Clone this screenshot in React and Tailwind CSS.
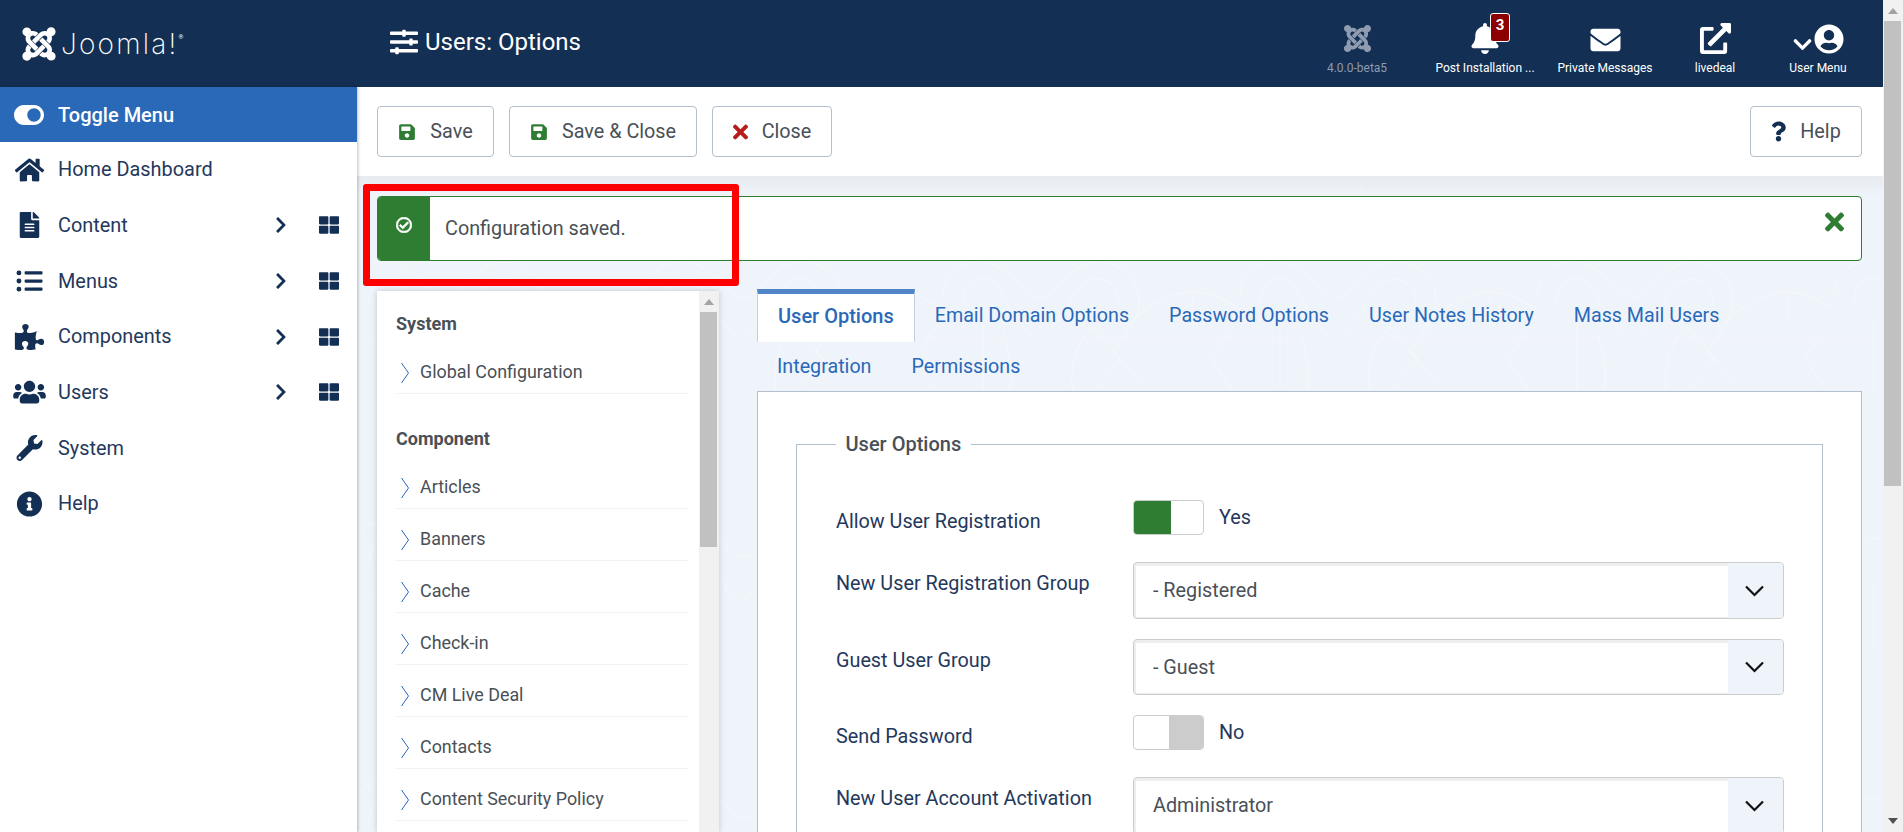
import React from "react";
import {
  FaJoomla, FaBell, FaEnvelope, FaExternalLinkAlt, FaUserCircle, FaHome, FaFileAlt, FaListUl,
  FaPuzzlePiece, FaUsers, FaWrench, FaInfoCircle, FaThLarge, FaSave, FaTimes, FaQuestion, FaChevronRight,
  FaSlidersH, FaToggleOn, FaRegCheckCircle, FaChevronDown,
} from "react-icons/fa";

function Scrollbar({ thumbTop, thumbHeight, arrows = true, className = "" }) {
  return (
    <div className={"relative w-[20px] shrink-0 bg-[#f1f1f1] " + className}>
      <div className="absolute left-[calc(50%-5px)] top-[8px] h-0 w-0 border-x-[5px] border-b-[6px] border-x-transparent border-b-[#a3a3a3]" />
      <div className="absolute left-[1px] w-[17px] bg-[#c1c1c1]" style={{ top: thumbTop, height: thumbHeight }} />
      {arrows && (
        <div className="absolute bottom-[8px] left-[calc(50%-5px)] h-0 w-0 border-x-[5px] border-t-[6px] border-x-transparent border-t-[#505050]" />
      )}
    </div>
  );
}

function HeaderItem({ width, label, muted, children }) {
  return (
    <div className={"flex shrink-0 flex-col items-center " + width}>
      <div className="flex h-[41px] items-end justify-center">{children}</div>
      <div className={"mt-[7px] text-[12px] leading-[14px] " + (muted ? "text-[#8e9bb0]" : "text-white")}>{label}</div>
    </div>
  );
}

function Header() {
  return (
    <header className="flex h-[87px] shrink-0 items-center bg-[#132f53] text-white">
      <div className="flex w-[390px] shrink-0 items-center pl-[20px]">
        <FaJoomla className="h-[38px] w-[38px]" />
        <span className="ml-[3px] font-['Inter'] text-[28px] font-extralight leading-none tracking-[2.2px]">Joomla!</span>
        <span className="mb-[14px] text-[6px] leading-none">®</span>
      </div>
      <FaSlidersH className="mb-[3px] h-[28px] w-[30px] -translate-x-[1px]" />
      <h1 className="mb-[3px] ml-[5px] text-[24px] leading-none">Users: Options</h1>
      <div className="ml-auto flex items-start pr-[16px] pt-[1px]">
        <HeaderItem width="w-[128px]" label="4.0.0-beta5" muted>
          <FaJoomla className="h-[31px] w-[31px] text-[#8e9bb0]" />
        </HeaderItem>
        <HeaderItem width="w-[128px]" label="Post Installation ...">
          <div className="relative">
            <FaBell className="h-[31px] w-[28px]" />
            <span className="absolute -top-[10px] left-[19px] flex h-[29px] w-[20px] items-center justify-center rounded-[3px] border border-white bg-[#8b0000] pb-[5px] text-[15px] font-bold">3</span>
          </div>
        </HeaderItem>
        <HeaderItem width="w-[112px]" label="Private Messages">
          <FaEnvelope className="mb-[-1px] h-[30px] w-[31px]" />
        </HeaderItem>
        <HeaderItem width="w-[108px]" label="livedeal">
          <FaExternalLinkAlt className="h-[31px] w-[31px]" />
        </HeaderItem>
        <HeaderItem width="w-[98px]" label="User Menu">
          <div className="flex items-end">
            <FaChevronDown className="mb-[-1px] h-[21px] w-[21px]" />
            <FaUserCircle className="ml-[1px] h-[30px] w-[30px]" />
          </div>
        </HeaderItem>
      </div>
    </header>
  );
}

function SideItem({ icon: Icon, label, more }) {
  return (
    <div className="flex h-[55.67px] items-center text-[19.9px] text-[#24385c]">
      <span className="flex w-[58px] shrink-0 justify-center text-[#132f53]">
        <Icon className="h-[26px] w-[33px]" />
      </span>
      <span className="pt-[1px]">{label}</span>
      {more && (
        <span className="ml-auto flex items-center pr-[17px] text-[#132f53]">
          <FaChevronRight className="h-[18px] w-[14px]" />
          <FaThLarge className="ml-[30px] h-[20px] w-[22px]" />
        </span>
      )}
    </div>
  );
}

function Sidebar() {
  return (
    <aside className="z-10 w-[357px] shrink-0 bg-white shadow-[1px_0_3px_rgba(0,0,0,0.25)]">
      <div className="flex h-[55px] items-center bg-[#2a69b8] text-[20px] font-medium text-white">
        <span className="flex w-[58px] shrink-0 justify-center">
          <FaToggleOn className="h-[30px] w-[30px]" />
        </span>
        Toggle Menu
      </div>
      <SideItem icon={FaHome} label="Home Dashboard" />
      <SideItem icon={FaFileAlt} label="Content" more />
      <SideItem icon={FaListUl} label="Menus" more />
      <SideItem icon={FaPuzzlePiece} label="Components" more />
      <SideItem icon={FaUsers} label="Users" more />
      <SideItem icon={FaWrench} label="System" />
      <SideItem icon={FaInfoCircle} label="Help" />
    </aside>
  );
}

function ToolButton({ icon: Icon, iconClass, label, width }) {
  return (
    <button className={"flex h-[51px] items-center justify-center gap-[14px] rounded-[4px] border border-[#b2bfcd] bg-white text-[19.8px] text-[#495057] " + width}>
      <Icon className={iconClass} />
      {label}
    </button>
  );
}

function Toolbar() {
  return (
    <div className="relative flex h-[89px] shrink-0 items-center bg-white pl-[20px] pr-[21px]">
      <div className="flex gap-[15px]">
        <ToolButton icon={FaSave} iconClass="h-[18px] w-[18px] text-[#2f7d32]" label="Save" width="w-[117px]" />
        <ToolButton icon={FaSave} iconClass="h-[18px] w-[18px] text-[#2f7d32]" label="Save & Close" width="w-[188px]" />
        <ToolButton icon={FaTimes} iconClass="h-[22px] w-[15px] text-[#b71c1c]" label="Close" width="w-[120px]" />
      </div>
      <div className="ml-auto">
        <ToolButton icon={FaQuestion} iconClass="h-[21px] w-[15px] text-[#132f53]" label="Help" width="w-[112px]" />
      </div>
    </div>
  );
}

function Alert() {
  return (
    <div className="mt-[20px] flex h-[65px] overflow-hidden rounded-[4px] border border-[#2f7d32] bg-white">
      <div className="flex w-[52px] shrink-0 justify-center bg-[#2f7d32] pt-[20px] text-white">
        <FaRegCheckCircle className="h-[16px] w-[16px]" stroke="currentColor" strokeWidth="24" />
      </div>
      <div className="flex flex-1 items-center pl-[15px] pt-[1px] text-[19.8px] text-[#495057]">Configuration saved.</div>
      <div className="pr-[17px] pt-[11px] text-[#2f7d32]">
        <FaTimes className="h-[28px] w-[19px]" />
      </div>
    </div>
  );
}

function NavItem({ label }) {
  return (
    <div className="flex h-[52px] items-start border-b border-[#eff2f7] pt-[18px] text-[17.9px] leading-[24px] text-[#495057]">
      <svg width="10" height="22" viewBox="0 0 10 22" fill="none" className="ml-[4px] mt-[2px] shrink-0">
        <path d="M1.5 1 L8.5 11 L1.5 21" stroke="#2a69b8" strokeWidth="1" />
      </svg>
      <span className="ml-[10px]">{label}</span>
    </div>
  );
}

function NavPanel() {
  return (
    <div className="mt-[2px] flex w-[342px] shrink-0 self-stretch bg-white shadow-[0_0_6px_rgba(0,0,0,0.2)]">
      <div className="flex-1 pl-[19px] pr-[11px]">
        <div className="h-[51px] pt-[21px] text-[18px] font-bold leading-[24px] text-[#495057]">System</div>
        <NavItem label="Global Configuration" />
        <div className="h-[63px] pt-[33px] text-[18px] font-bold leading-[24px] text-[#495057]">Component</div>
        <NavItem label="Articles" />
        <NavItem label="Banners" />
        <NavItem label="Cache" />
        <NavItem label="Check-in" />
        <NavItem label="CM Live Deal" />
        <NavItem label="Contacts" />
        <NavItem label="Content Security Policy" />
      </div>
      <Scrollbar thumbTop={21} thumbHeight={235} arrows={false} />
    </div>
  );
}

function Tab({ label, active }) {
  if (active) {
    return (
      <div className="flex h-[53px] items-center border-x border-t-[5px] border-x-[#c5d0dd] border-t-[#5085c8] bg-white px-[20px] pb-[5px] text-[20px] font-medium text-[#2a69b8]">
        {label}
      </div>
    );
  }
  return <div className="flex items-center px-[20px] pt-[1px] text-[19.7px] text-[#2a69b8]">{label}</div>;
}

function Toggle({ on }) {
  return (
    <div className="flex h-[35px] w-[71px] shrink-0 overflow-hidden rounded-[4px] border border-[#ccc] bg-white">
      {on ? (
        <>
          <div className="w-[37px] bg-[#2f7d32]" />
          <div className="flex-1" />
        </>
      ) : (
        <>
          <div className="w-[35px]" />
          <div className="flex-1 bg-[#ccc]" />
        </>
      )}
    </div>
  );
}

function Label({ children }) {
  return <label className="w-[297px] shrink-0 pt-[10px] text-[19.8px] leading-[24px] text-[#24385c]">{children}</label>;
}

function ToggleRow({ label, on, value }) {
  return (
    <div className="mb-[27px] flex items-start">
      <Label>{label}</Label>
      <Toggle on={on} />
      <span className="ml-[15px] pt-[6px] text-[19.8px] leading-[24px] text-[#24385c]">{value}</span>
    </div>
  );
}

function SelectRow({ label, value, height }) {
  return (
    <div className="mb-[20px] flex items-start">
      <Label>{label}</Label>
      <div className={"flex w-[651px] shrink-0 overflow-hidden rounded-[4px] border border-[#ccc] bg-white shadow-[inset_0_1px_0_2px_#eeeeee] " + height}>
        <div className="flex flex-1 items-center pl-[19px] pt-[1px] text-[19.8px] text-[#495057]">{value}</div>
        <div className="flex w-[55px] items-center justify-center bg-[#eff4fb] pr-[2px]">
          <svg width="19" height="12" viewBox="0 0 19 12" fill="none">
            <path d="M1 1.5 L9.5 10 L18 1.5" stroke="#111" strokeWidth="2.2" />
          </svg>
        </div>
      </div>
    </div>
  );
}

function Content() {
  return (
    <div className="w-[1105px] shrink-0">
      <div className="flex h-[53px]">
        <Tab label="User Options" active />
        <Tab label="Email Domain Options" />
        <Tab label="Password Options" />
        <Tab label="User Notes History" />
        <Tab label="Mass Mail Users" />
      </div>
      <div className="flex h-[49px]">
        <Tab label="Integration" />
        <Tab label="Permissions" />
      </div>
      <div className="h-[600px] border border-[#b2bfcd] bg-white px-[38px] pt-[40px]">
        <fieldset className="h-[560px] border border-[#b2bfcd] pl-[39px]">
          <legend className="px-[9.5px] text-[20px] font-medium leading-[24px] text-[#495057]">User Options</legend>
          <div className="pt-[44px]">
            <ToggleRow label="Allow User Registration" on value="Yes" />
            <SelectRow label="New User Registration Group" value="- Registered" height="h-[57px]" />
            <SelectRow label="Guest User Group" value="- Guest" height="h-[56px]" />
            <ToggleRow label="Send Password" value="No" />
            <SelectRow label="New User Account Activation" value="Administrator" height="h-[57px]" />
          </div>
        </fieldset>
      </div>
    </div>
  );
}

function Pattern() {
  return (
    <svg className="absolute inset-0 h-full w-full" aria-hidden="true">
      <defs>
        <pattern id="swirl" width="297" height="260" patternUnits="userSpaceOnUse" patternTransform="translate(883 175)">
          <g fill="none" stroke="#ffffff" strokeOpacity="0.35" strokeWidth="1">
            <path d="M0 33 C0 12 22 -4 42 0 C62 4 80 26 90 33 Q98 38 106 33 C120 22 132 0 155 0 C176 0 196 14 196 40 C196 60 180 75 170 90 L198 120" />
            <path d="M20 40 C20 25 30 15 42 16 C56 18 60 38 72 55 L92 78 M176 40 C176 28 166 16 152 17 C136 20 128 40 118 55 L98 78" />
            <path d="M181 70 C196 48 226 30 250 30 C274 30 304 48 319 70" />
            <path d="M150 65 L178 97 L150 130 M290 65 L268 97 L290 130" />
            <path d="M130 130 C126 105 132 82 150 65 M250 30 V62 M40 60 V130 M60 70 C70 100 70 120 66 130" />
            <path d="M0 76 H64 M120 76 H297" strokeOpacity="0.2" />
            <path d="M120 175 C120 205 150 235 170 240 C200 235 225 205 225 175 C225 150 205 130 170 130 C140 130 120 150 120 175 Z" strokeOpacity="0.25" />
          </g>
        </pattern>
      </defs>
      <rect width="100%" height="100%" fill="url(#swirl)" />
    </svg>
  );
}

export default function App() {
  return (
    <div className="flex h-screen overflow-hidden bg-white font-['Roboto',sans-serif]">
      <div className="flex min-w-0 flex-1 flex-col">
        <Header />
        <div className="flex min-h-0 flex-1">
          <Sidebar />
          <main className="relative flex min-w-0 flex-1 flex-col overflow-hidden bg-[#eff4fb]">
            <Pattern />
            <Toolbar />
            <div className="relative -mb-[20px] h-[20px] bg-gradient-to-b from-[#e8ebf0] to-transparent" />
            <div className="relative flex min-h-0 flex-1 flex-col pl-[20px] pr-[21px]">
              <Alert />
              <div className="mt-[28px] flex min-h-0 flex-1 gap-[38px]">
                <NavPanel />
                <Content />
              </div>
            </div>
            <div className="absolute left-[6px] top-[97px] h-[102px] w-[376px] rounded-[3px] border-[7px] border-[#ff0000]" />
          </main>
        </div>
      </div>
      <Scrollbar thumbTop={21} thumbHeight={465} />
    </div>
  );
}
